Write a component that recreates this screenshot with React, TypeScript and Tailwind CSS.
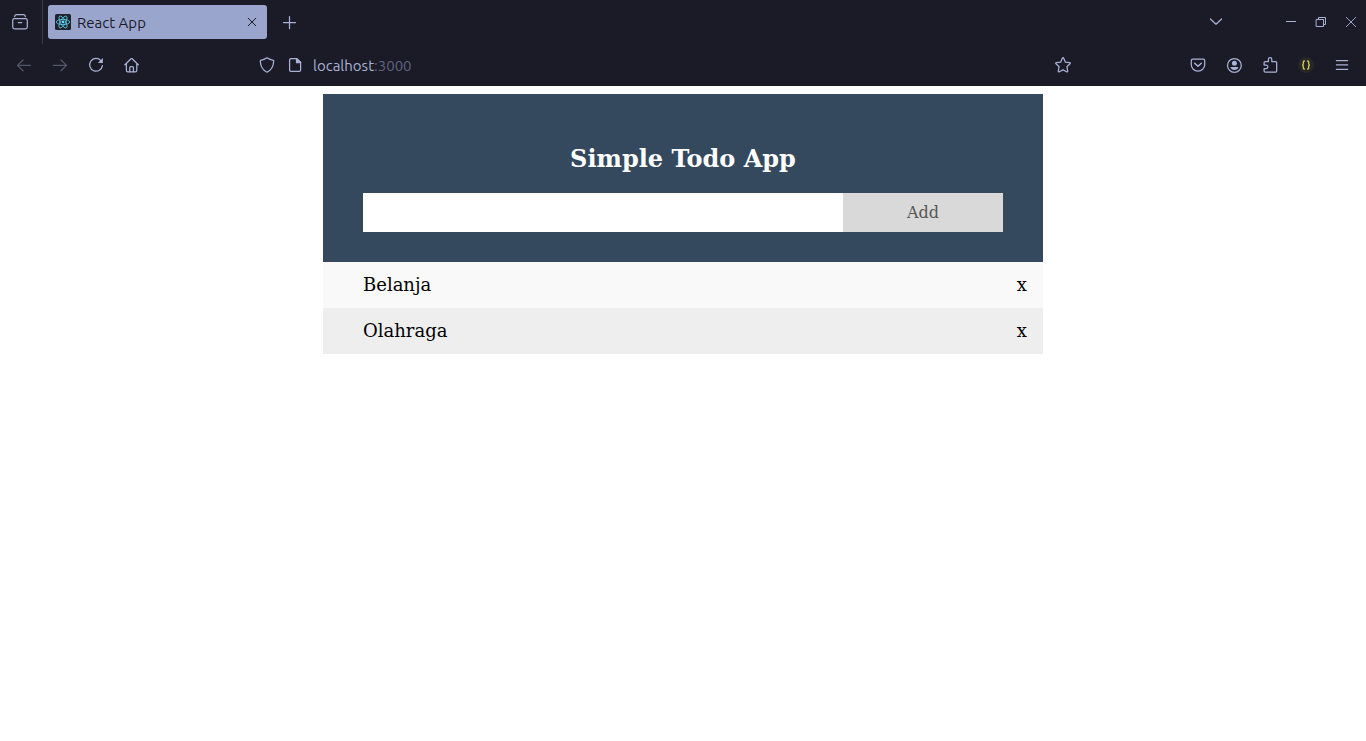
import { useState } from "react";
import type { FormEvent, ReactNode } from "react";

function Icon({ children, size = "size-4" }: { children: ReactNode; size?: string }) {
  return (
    <svg
      viewBox="0 0 16 16"
      className={`${size} shrink-0`}
      fill="none"
      stroke="currentColor"
      strokeWidth="1.25"
      strokeLinecap="round"
      strokeLinejoin="round"
      aria-hidden="true"
    >
      {children}
    </svg>
  );
}

function ToolButton({
  label,
  children,
  disabled = false,
}: {
  label: string;
  children: ReactNode;
  disabled?: boolean;
}) {
  return (
    <button
      type="button"
      aria-label={label}
      disabled={disabled}
      className="flex h-8 w-9 shrink-0 items-center justify-center disabled:opacity-40"
    >
      <Icon>{children}</Icon>
    </button>
  );
}

function ReactLogo() {
  return (
    <svg viewBox="0 0 16 16" className="size-4 shrink-0" aria-hidden="true">
      <rect width="16" height="16" rx="1.5" fill="#20232a" />
      <g fill="none" stroke="#61dafb" strokeWidth="0.75">
        <ellipse cx="8" cy="8" rx="6.7" ry="2.6" />
        <ellipse cx="8" cy="8" rx="6.7" ry="2.6" transform="rotate(60 8 8)" />
        <ellipse cx="8" cy="8" rx="6.7" ry="2.6" transform="rotate(120 8 8)" />
      </g>
      <circle cx="8" cy="8" r="1.4" fill="#61dafb" />
    </svg>
  );
}

function TabStrip() {
  return (
    <div className="flex h-11 items-center">
      <button
        type="button"
        aria-label="Recent browsing"
        className="flex h-11 w-[43px] shrink-0 items-center border-r border-[#3a3b4d] pl-3"
      >
        <Icon>
          <path d="M2.6 2.6Q2.8 .7 4.6 .7h6.8Q13.2 .7 13.4 2.6" />
          <rect x=".7" y="4.7" width="14.6" height="10.2" rx="1.8" />
          <path d="M6.3 8.6h3.4" />
        </Icon>
      </button>
      <div className="ml-[5px] flex h-[34px] w-[219px] items-center rounded-[3px] bg-[#9aa5ce] px-[7px] text-[#1a1b26]">
        <ReactLogo />
        <span className="ml-[6px] flex-1 pt-0.5 text-[15px] leading-5">React App</span>
        <button type="button" aria-label="Close tab" className="flex size-4 items-center justify-center">
          <Icon>
            <path d="M4.2 4.2l7.6 7.6M11.8 4.2l-7.6 7.6" strokeWidth="1" />
          </Icon>
        </button>
      </div>
      <button type="button" aria-label="New tab" className="ml-[5px] flex h-8 w-9 items-center justify-center">
        <Icon>
          <path d="M7.5 2.5v12M1.5 8.5h12" />
        </Icon>
      </button>
      <div className="ml-auto flex items-center">
        <button type="button" aria-label="List all tabs" className="mr-[42px] flex h-8 w-9 items-center justify-center">
          <Icon>
            <path d="M2.4 5l5.6 5.2L13.6 5" />
          </Icon>
        </button>
        <button type="button" aria-label="Minimize" className="flex h-8 w-[30px] items-center justify-center">
          <Icon>
            <path d="M3 7.5h10" strokeWidth="1" strokeLinecap="butt" />
          </Icon>
        </button>
        <button type="button" aria-label="Restore" className="flex h-8 w-[30px] items-center justify-center">
          <Icon>
            <path d="M3.5 5.5h7v7h-7zM5.5 5.5v-2h7v7h-2" strokeWidth="1" strokeLinejoin="miter" />
          </Icon>
        </button>
        <button type="button" aria-label="Close" className="flex h-8 w-[30px] items-center justify-center">
          <Icon>
            <path d="M3 3l10 10M13 3L3 13" strokeWidth="0.9" strokeLinecap="butt" />
          </Icon>
        </button>
      </div>
    </div>
  );
}

function NavBar() {
  return (
    <div className="flex h-[42px] items-center px-[6px]">
      <ToolButton label="Back" disabled>
        <path d="M14.6 8.4H1.600M7 3L1.500 8.400L7 13.800" />
      </ToolButton>
      <ToolButton label="Forward" disabled>
        <path d="M1.400 8.400h13M9 3L14.500 8.400L9 13.800" />
      </ToolButton>
      <ToolButton label="Reload">
        <path d="M12.9 3.6A6.4 6.4 0 1 0 14.4 8.6" />
        <path d="M14.9 1.1v5H9.900z" fill="currentColor" stroke="none" />
      </ToolButton>
      <ToolButton label="Home">
        <path d="M.9 7.8L7 1.8q.6-.6 1.2 0L14.3 7.8M2.4 6.6v6.9q0 1.4 1.4 1.4h7.6q1.4 0 1.4-1.4V6.6" />
        <path d="M5.8 14.7V10.6q0-1 1-1h1.6q1 0 1 1v4.1" />
      </ToolButton>

      <div className="mx-[102px] flex h-8 flex-1 items-center">
        <button type="button" aria-label="Tracking protection" className="flex h-8 w-[30px] items-center justify-center">
          <Icon>
            <path d="M8 .8C6 2.2 3.8 3 1.5 3.4c-.2 0-.2.3-.2.6C1.5 8.8 3.8 13.2 8 15.2c4.2-2 6.5-6.4 6.7-11.2 0-.3 0-.6-.2-.6C12.2 3 10 2.2 8 .8z" />
          </Icon>
        </button>
        <button type="button" aria-label="Site information" className="flex h-8 w-[26px] items-center justify-center">
          <Icon>
            <path d="M3.9 1.6h6l3.700 3.700v7.700q0 1.300-1.300 1.300H3.900q-1.300 0-1.300-1.300V2.900q0-1.300 1.300-1.300z" />
            <path d="M9.500 1.600v4.100h4.100z" fill="currentColor" />
          </Icon>
        </button>
        <a href="http://localhost:3000" className="ml-[5px] flex-1 pt-0.5 text-[15px] leading-5">
          localhost<span className="text-[#5f6380]">:3000</span>
        </a>
        <button type="button" aria-label="Bookmark this page" className="flex h-8 w-[30px] items-center justify-center">
          <Icon>
            <path d="M7.4 1.100q.6-1 1.200 0L10.300 5.100l4.300.5q1.100.3.400 1.100L11.900 9.700l.8 4.300q.1 1.200-1 .8L8 12.900l-3.700 1.900q-1.100.4-1-.8l.8-4.300L1 6.700q-.7-.8.400-1.100l4.300-.5z" />
          </Icon>
        </button>
      </div>

      <ToolButton label="Save to Pocket">
        <path d="M2.700 2.100h10.600q1.400 0 1.400 1.400v4.200a6.700 6.500 0 0 1-13.400 0V3.500q0-1.400 1.400-1.400z" />
        <path d="M4.700 6.200L8 9.200l3.300-3" strokeWidth="1.500" />
      </ToolButton>
      <ToolButton label="Account">
        <circle cx="8.4" cy="8.4" r="6.9" />
        <circle cx="8.4" cy="6.300" r="2.500" fill="currentColor" stroke="none" />
        <path d="M4.400 10h8q-.7 2.900-4 2.900t-4-2.900z" fill="currentColor" stroke="none" />
      </ToolButton>
      <ToolButton label="Extensions">
        <path d="M3.100 15.100q-1 0-1-1v-2.600h2.100a1.700 1.700 0 0 0 0-3.400H2.100V5.500q0-1 1-1h3.300V2.400a1.700 1.700 0 0 1 3.400 0v2.100h3.900q1 0 1 1v8.600q0 1-1 1z" />
      </ToolButton>
      <button
        type="button"
        aria-label="JSON formatter"
        className="flex h-8 w-9 items-center justify-center text-[#d6c95c]"
      >
        <svg viewBox="0 0 16 16" className="size-4" aria-hidden="true">
          <circle cx="8" cy="8" r="8" fill="#272727" />
          <g fill="none" stroke="currentColor" strokeWidth="1.3">
            <path d="M6.900 4H6.300q-1 0-1 1v1.800q0 1.200-1.200 1.200 1.200 0 1.200 1.200V11q0 1 1 1h.6" />
            <path d="M9.100 4h.6q1 0 1 1v1.800q0 1.200 1.200 1.200-1.200 0-1.200 1.200V11q0 1-1 1h-.6" />
          </g>
        </svg>
      </button>
      <ToolButton label="Open application menu">
        <path d="M2.400 3.500h11.200M2.400 7.900h11.200M2.400 12.400h11.200" />
      </ToolButton>
    </div>
  );
}

function TodoApp() {
  const [items, setItems] = useState(["Belanja", "Olahraga"]);
  const [text, setText] = useState("");

  const addItem = (event: FormEvent) => {
    event.preventDefault();
    const value = text.trim();
    if (!value) return;
    setItems([...items, value]);
    setText("");
  };

  return (
    <main className="mx-auto mt-2 w-full max-w-[720px] font-['DejaVu_Serif',serif] text-black">
      <header className="bg-[#34495e] px-10 pt-[50px] pb-[30px]">
        <h2 className="mb-5 text-center text-2xl leading-[29px] font-bold text-white">Simple Todo App</h2>
        <form onSubmit={addItem} className="flex h-[39px]">
          <input
            type="text"
            aria-label="New todo"
            value={text}
            onChange={(event) => setText(event.target.value)}
            className="w-3/4 bg-white px-[10px] text-base outline-none"
          />
          <button type="submit" className="w-1/4 bg-[#d9d9d9] text-base text-[#555555]">
            Add
          </button>
        </form>
      </header>
      <ul>
        {items.map((item, index) => (
          <li
            key={index}
            className="flex items-center justify-between py-3 pr-4 pl-10 text-lg leading-[22px] odd:bg-[#f9f9f9] even:bg-[#eeeeee]"
          >
            <span>{item}</span>
            <button
              type="button"
              aria-label={`Delete ${item}`}
              onClick={() => setItems(items.filter((_, i) => i !== index))}
            >
              x
            </button>
          </li>
        ))}
      </ul>
    </main>
  );
}

export default function App() {
  return (
    <div className="min-h-screen bg-white">
      <div className="bg-[#1a1b26] font-['Ubuntu','Noto_Sans',sans-serif] text-[#a9b1d6]">
        <TabStrip />
        <NavBar />
      </div>
      <TodoApp />
    </div>
  );
}
